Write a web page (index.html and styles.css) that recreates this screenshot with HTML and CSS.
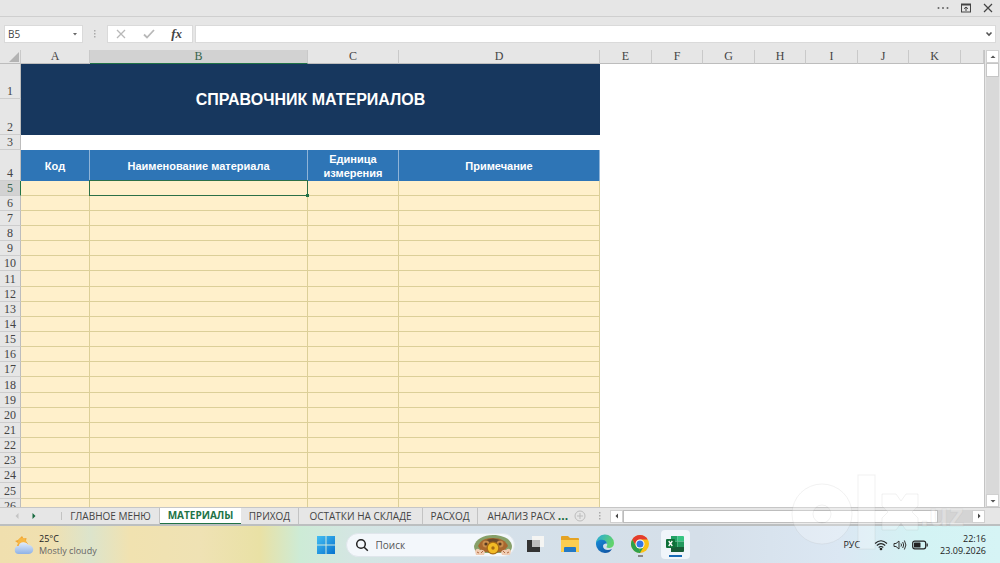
FILE: index.html
```html
<!DOCTYPE html>
<html lang="ru">
<head>
<meta charset="utf-8">
<meta name="viewport" content="width=device-width, initial-scale=1">
<title>Справочник материалов</title>
<link rel="stylesheet" href="styles.css">
</head>
<body>
<div class="screen">
  <header class="titlebar">
    <button class="icon-button" aria-label="Ещё"><svg width="14" height="12" viewBox="0 0 14 12" fill="#666"><circle cx="2.500" cy="6" r="1"/><circle cx="7" cy="6" r="1"/><circle cx="11.500" cy="6" r="1"/></svg></button>
    <button class="icon-button" aria-label="Параметры ленты"><svg width="12" height="12" viewBox="0 0 12 12" fill="none" stroke="#444"><path d="M1 2.500h10" stroke-width="2"/><rect x="1.500" y="2.500" width="9" height="7.500"/><path d="M6 9V5M4 6.800 6 5l2 1.800"/></svg></button>
    <button class="icon-button" aria-label="Закрыть"><svg width="12" height="12" viewBox="0 0 12 12" fill="none" stroke="#444" stroke-width="1.200"><path d="m2 2 8 8M10 2l-8 8"/></svg></button>
  </header>

  <div class="formula-row">
    <div class="name-box">
      <input class="name-input" type="text" value="B5" aria-label="Имя ячейки">
      <button class="icon-button" aria-label="Список имён"><svg width="8" height="8" viewBox="0 0 8 8" fill="#666"><path d="M2 3h4L4 5.500z"/></svg></button>
    </div>
    <svg class="grip" width="4" height="12" viewBox="0 0 4 12" fill="#aaa"><path d="M1 2h1.500v1.500H1zM1 5h1.500v1.500H1zM1 8h1.500v1.500H1z"/></svg>
    <div class="formula-tools">
      <button class="icon-button" aria-label="Отмена"><svg width="12" height="12" viewBox="0 0 12 12" fill="none" stroke="#b8b8b8" stroke-width="1.300"><path d="m2 2 8 8M10 2l-8 8"/></svg></button>
      <button class="icon-button" aria-label="Ввод"><svg width="12" height="12" viewBox="0 0 12 12" fill="none" stroke="#b8b8b8" stroke-width="1.800"><path d="m1 6.500 3 3L11 2"/></svg></button>
      <button class="icon-button fx" aria-label="Вставить функцию">fx</button>
    </div>
    <div class="formula-box">
      <input class="formula-input" type="text" aria-label="Строка формул">
      <button class="icon-button" aria-label="Развернуть"><svg width="10" height="10" viewBox="0 0 10 10" fill="none" stroke="#555" stroke-width="1.600"><path d="m2.500 3.500 2.500 2.500 2.500-2.500"/></svg></button>
    </div>
  </div>

  <main class="workspace">
    <div class="sheet">
      <table class="grid">
        <colgroup><col class="c-num"><col class="c-a"><col class="c-b"><col class="c-c"><col class="c-d"><col class="c-even"><col class="c-odd"><col class="c-even"><col class="c-odd"><col class="c-even"><col class="c-odd"><col class="c-even"><col></colgroup>
        <thead>
          <tr class="letters"><th class="corner"><svg width="12" height="12" viewBox="0 0 12 12"><path d="M11 1v10H1z" fill="#b3b3b3"/></svg></th><th>A</th><th class="picked">B</th><th>C</th><th>D</th><th>E</th><th>F</th><th>G</th><th>H</th><th>I</th><th>J</th><th>K</th><th></th></tr>
        </thead>
        <tbody>
          <tr class="title-top"><th>1</th><td class="title" colspan="4" rowspan="2">СПРАВОЧНИК МАТЕРИАЛОВ</td></tr>
          <tr class="title-bottom"><th>2</th></tr>
          <tr class="spacer"><th>3</th></tr>
          <tr class="heads"><th>4</th><td>Код</td><td>Наименование материала</td><td>Единица измерения</td><td>Примечание</td></tr>
        </tbody>
        <tbody class="entries">
          <tr><th class="picked">5</th><td></td><td class="active-cell"><span class="handle"></span></td><td></td><td></td></tr>
          <tr><th>6</th><td></td><td></td><td></td><td></td></tr>
          <tr><th>7</th><td></td><td></td><td></td><td></td></tr>
          <tr><th>8</th><td></td><td></td><td></td><td></td></tr>
          <tr><th>9</th><td></td><td></td><td></td><td></td></tr>
          <tr><th>10</th><td></td><td></td><td></td><td></td></tr>
          <tr><th>11</th><td></td><td></td><td></td><td></td></tr>
          <tr><th>12</th><td></td><td></td><td></td><td></td></tr>
          <tr><th>13</th><td></td><td></td><td></td><td></td></tr>
          <tr><th>14</th><td></td><td></td><td></td><td></td></tr>
          <tr><th>15</th><td></td><td></td><td></td><td></td></tr>
          <tr><th>16</th><td></td><td></td><td></td><td></td></tr>
          <tr><th>17</th><td></td><td></td><td></td><td></td></tr>
          <tr><th>18</th><td></td><td></td><td></td><td></td></tr>
          <tr><th>19</th><td></td><td></td><td></td><td></td></tr>
          <tr><th>20</th><td></td><td></td><td></td><td></td></tr>
          <tr><th>21</th><td></td><td></td><td></td><td></td></tr>
          <tr><th>22</th><td></td><td></td><td></td><td></td></tr>
          <tr><th>23</th><td></td><td></td><td></td><td></td></tr>
          <tr><th>24</th><td></td><td></td><td></td><td></td></tr>
          <tr><th>25</th><td></td><td></td><td></td><td></td></tr>
          <tr><th>26</th><td></td><td></td><td></td><td></td></tr>
        </tbody>
      </table>
    </div>
    <div class="vscroll">
      <button class="scroll-button" aria-label="Вверх"><svg width="8" height="8" viewBox="0 0 8 8" fill="#555"><path d="M1.500 5h5L4 2.500z"/></svg></button>
      <div class="vthumb"></div>
      <div class="vtrack"></div>
      <button class="scroll-button" aria-label="Вниз"><svg width="8" height="8" viewBox="0 0 8 8" fill="#555"><path d="M1.500 3h5L4 5.500z"/></svg></button>
    </div>
  </main>

  <div class="tabs-row">
    <div class="tab-arrows">
      <button class="icon-button" aria-label="Предыдущий лист"><svg width="8" height="8" viewBox="0 0 8 8" fill="#c4c4c4"><path d="M5.500 1v6L2.500 4z"/></svg></button>
      <button class="icon-button" aria-label="Следующий лист"><svg width="8" height="8" viewBox="0 0 8 8" fill="#17693f"><path d="M2.500 1v6L5.500 4z"/></svg></button>
    </div>
    <nav class="tabs">
      <button class="tab tab-menu">ГЛАВНОЕ МЕНЮ</button>
      <button class="tab tab-materials current">МАТЕРИАЛЫ</button>
      <button class="tab tab-income">ПРИХОД</button>
      <button class="tab tab-stock">ОСТАТКИ НА СКЛАДЕ</button>
      <button class="tab tab-expense">РАСХОД</button>
      <button class="tab tab-analysis">АНАЛИЗ РАСХ</button>
    </nav>
    <button class="icon-button more" aria-label="Другие листы">...</button>
    <button class="icon-button add" aria-label="Новый лист"><svg width="12" height="12" viewBox="0 0 12 12" fill="none" stroke="#bdbdbd"><circle cx="6" cy="6" r="5"/><path d="M6 3v6M3 6h6"/></svg></button>
    <svg class="grip" width="4" height="12" viewBox="0 0 4 12" fill="#aaa"><path d="M1 2h1.500v1.500H1zM1 5h1.500v1.500H1zM1 8h1.500v1.500H1z"/></svg>
    <div class="hscroll">
      <button class="scroll-button" aria-label="Влево"><svg width="8" height="8" viewBox="0 0 8 8" fill="#444"><path d="M5 1.500v5L2.500 4z"/></svg></button>
      <div class="hthumb"></div>
      <div class="htrack"></div>
      <button class="scroll-button" aria-label="Вправо"><svg width="8" height="8" viewBox="0 0 8 8" fill="#444"><path d="M3 1.500v5L5.500 4z"/></svg></button>
    </div>
  </div>

  <footer class="taskbar">
    <div class="weather">
      <svg width="20" height="20" viewBox="0 0 20 20"><defs><linearGradient id="cloud" x1="0" y1="0" x2="0" y2="1"><stop offset="0" stop-color="#e2ecfb"/><stop offset="1" stop-color="#8fb2e6"/></linearGradient></defs><path d="M8 1l1.500 2.500 3-.5-.5 3 2 3-4 3-7-1L4 8 1 6l3-1z" fill="#f2a531"/><circle cx="8" cy="7" r="4" fill="#f7b844"/><path d="M5 19a4 4 0 0 1-.5-8 5.500 5.500 0 0 1 10-1 4.500 4.500 0 0 1 .5 9z" fill="url(#cloud)"/></svg>
      <div class="weather-text"><span class="degrees">25°C</span><span class="sky">Mostly cloudy</span></div>
    </div>
    <div class="apps">
      <button class="icon-button app-start" aria-label="Пуск"><svg width="20" height="20" viewBox="0 0 20 20"><defs><linearGradient id="win" x1="0" y1="0" x2="1" y2="1"><stop offset="0" stop-color="#43bdf2"/><stop offset="1" stop-color="#0873cf"/></linearGradient></defs><path d="M1 1h8.500v8.500H1zM10.500 1H19v8.500h-8.500zM1 10.500h8.500V19H1zM10.500 10.500H19V19h-8.500z" fill="url(#win)"/></svg></button>
      <div class="search">
        <svg width="14" height="14" viewBox="0 0 14 14" fill="none" stroke="#222" stroke-width="1.500"><circle cx="6" cy="6" r="4.300"/><path d="m9.200 9.200 3.600 3.600"/></svg>
        <input class="search-input" type="text" placeholder="Поиск" aria-label="Поиск">
        <svg width="40" height="22" viewBox="0 0 40 22"><path d="M1 12C3 5 10 1 20 1s18 4 19 11q0 5-4 7H5q-4-2-4-7z" fill="#87a069"/><path d="M5 12C8 6 12 4 20 4s13 3 15 8l-5 6H9z" fill="#a8672f"/><path d="M11 7q9-5 18 0l-4 4H15z" fill="#6d4a2a"/><circle cx="13" cy="10" r="3.500" fill="#c98d4c"/><circle cx="27" cy="10" r="3.500" fill="#c98d4c"/><circle cx="13" cy="10" r="1.600" fill="#573a22"/><circle cx="27" cy="10" r="1.600" fill="#573a22"/><circle cx="20" cy="14" r="6.500" fill="#a76c16"/><circle cx="20" cy="14" r="5.200" fill="#f2bb25"/><circle cx="20" cy="14" r="1.700" fill="#a66c12"/><path d="M2 17q2-4 5-1 3-1 5 2l-1 3H3zM38 17q-2-4-5-1-3-1-5 2l1 3h8z" fill="#f0cdb4"/><path d="m4 18 2 1M10 17l-2 2M36 18l-2 1M30 17l2 2" stroke="#b06a40"/></svg>
      </div>
      <button class="icon-button app" aria-label="Представление задач"><svg width="20" height="20" viewBox="0 0 20 20"><path d="M7 2h12v11H7z" fill="#f5f5f3"/><path d="M2 6h13v12H2z" fill="#333"/><path d="M7 6h8v7H7z" fill="#bdbdbd"/></svg></button>
      <button class="icon-button app" aria-label="Проводник"><svg width="20" height="20" viewBox="0 0 20 20"><path d="M1 3q0-1 1-1h6l2 2h8q1 0 1 1v13H1z" fill="#e5a323"/><path d="M1 6h18v11q0 1-1 1H2q-1 0-1-1z" fill="#fbce50"/><path d="M4 18v-4q0-1 1-1h10q1 0 1 1v4z" fill="#2379c5"/></svg></button>
      <button class="icon-button app" aria-label="Edge"><svg width="20" height="20" viewBox="0 0 20 20"><defs><linearGradient id="edgeTop" x1="0" y1="0" x2="1" y2=".4"><stop offset="0" stop-color="#25a8dd"/><stop offset="1" stop-color="#61d36c"/></linearGradient><linearGradient id="edgeBody" x1="0" y1="0" x2="1" y2="1"><stop offset="0" stop-color="#178bd8"/><stop offset="1" stop-color="#104e9d"/></linearGradient></defs><path d="M1 10a9 9 0 0 1 18-1c0 4-3 5-5 5-2.500 0-3-1-2-2 1-3-1-5-4-5-4 0-6 2-7 5z" fill="url(#edgeTop)"/><path d="M1 10c0-3 4-5 7-4 2 0 4 2 4 4-1-1-4 0-4 2 0 4 5 5 9 3-2 3-4 4-7 4a9 9 0 0 1-9-9z" fill="url(#edgeBody)"/></svg></button>
      <button class="icon-button app app-open" aria-label="Chrome"><svg width="20" height="20" viewBox="0 0 20 20"><circle cx="10" cy="10" r="9" fill="#fbc116"/><path d="M2.200 5.500a9 9 0 0 1 15.600 0H10a4.500 4.500 0 0 0-3.900 6.700z" fill="#e33b2e"/><path d="M2.200 5.500 6.100 12.300A4.500 4.500 0 0 0 10 14.500L8.500 18.900A9 9 0 0 1 2.200 5.500z" fill="#2da14c"/><path d="M13.900 12.300 10 19a9 9 0 0 1-1.500-.1L10 14.500z" fill="#2da14c"/><circle cx="10" cy="10" r="4.500" fill="#fff"/><circle cx="10" cy="10" r="3.500" fill="#3577e5"/></svg></button>
      <button class="icon-button app app-current" aria-label="Excel"><svg width="20" height="20" viewBox="0 0 20 20"><path d="M6 2h6.500v5.500H6z" fill="#23a366"/><path d="M12.500 2H18q1 0 1 1v4.500h-6.500z" fill="#36c481"/><path d="M6 7.500h6.500V13H6z" fill="#107c41"/><path d="M12.500 7.500H19V13h-6.500z" fill="#23995e"/><path d="M6 13h13v4q0 1-1 1H6z" fill="#185c37"/><rect x="1" y="5" width="9" height="9" rx="1" fill="#0f7039"/><path d="m3.700 7 3.600 5M7.300 7l-3.600 5" stroke="#fff" stroke-width="1.300"/></svg></button>
    </div>
    <div class="tray">
      <span class="language">РУС</span>
      <svg width="14" height="12" viewBox="0 0 14 12" fill="none" stroke="#222" stroke-width="1.100"><path d="M1 4.500q6-5.500 12 0M2.800 6.500q4.200-3.800 8.400 0M4.700 8.500q2.300-2 4.600 0"/><circle cx="7" cy="10" r=".8" fill="#222"/></svg>
      <svg width="14" height="12" viewBox="0 0 14 12" fill="none" stroke="#333"><path d="M1 4.500h2L6 2v8L3 7.500H1zM8 4.500q1 1.500 0 3M9.700 3q2 3 0 6M11.400 1.500q3 4.500 0 9"/></svg>
      <svg width="16" height="12" viewBox="0 0 16 12"><rect x=".7" y="2.200" width="13" height="7.600" rx="2" fill="none" stroke="#222" stroke-width="1.200"/><rect x="2" y="3.500" width="6.500" height="5" rx=".6" fill="#222"/><path d="M15.200 4.500v3" stroke="#222" stroke-width="1.200"/></svg>
      <div class="clock"><span>22:16</span><span>23.09.2026</span></div>
    </div>
  </footer>

  <svg class="watermark" width="200" height="90" viewBox="0 0 200 90" aria-hidden="true">
    <g fill="#fff" fill-opacity=".25" stroke="#999" stroke-opacity=".14">
      <path fill-rule="evenodd" d="M2 46a30 30 0 1 0 60 0a30 30 0 1 0-60 0zM23 46a9 9 0 1 0 18 0a9 9 0 1 0-18 0z"/>
      <rect x="68" y="7" width="17" height="74"/>
      <path d="M92 26h14l5 7 5-7h12v12l-6 6 6 6v12h-12l-5-7-5 7H92V50l6-6-6-6z"/>
      <text class="mark-uz" x="130" y="58">.uz</text>
    </g>
  </svg>
</div>
</body>
</html>
```
FILE: styles.css
```css
* { box-sizing: border-box; }

body {
  margin: 0;
  font-family: "Open Sans", "Noto Sans", sans-serif;
  font-size: 10px;
  color: #444;
}

button, input { font: inherit; color: inherit; }

svg { display: block; flex: none; }

.screen {
  position: relative;
  display: flex;
  flex-direction: column;
  height: 100vh;
  overflow: hidden;
  background: #e6e6e6;
}

.icon-button {
  display: flex;
  align-items: center;
  justify-content: center;
  padding: 0;
  border: 0;
  background: none;
}

/* Title bar and formula bar */
.titlebar {
  display: flex;
  flex: none;
  justify-content: flex-end;
  gap: 10px;
  height: 17px;
  padding-right: 6px;
  border-bottom: 1px solid #cfcfcf;
}

.formula-row {
  display: flex;
  flex: none;
  align-items: center;
  height: 33px;
  padding: 0 4px;
}

.name-box, .formula-tools, .formula-box {
  display: flex;
  align-items: center;
  height: 18px;
  background: #fff;
  border: 1px solid #dadada;
}

.name-box { width: 79px; padding-right: 3px; }

.name-input, .formula-input {
  flex: 1;
  min-width: 0;
  padding: 0 3px;
  border: 0;
  background: none;
}

.grip { margin: 0 10px; }

.formula-tools { justify-content: space-between; width: 86px; padding: 0 10px 0 7px; }

.fx {
  font-family: "Liberation Serif", serif;
  font-size: 13px;
  font-style: italic;
  font-weight: bold;
}

.formula-box { flex: 1; margin-left: 2px; padding-right: 1px; }

/* Sheet */
.workspace { display: flex; flex: 1; min-height: 0; }

.sheet {
  flex: 1;
  overflow: hidden;
  background: #fff;
  border-right: 1px solid #c4c4c4;
}

.grid {
  width: 100%;
  table-layout: fixed;
  border-collapse: separate;
  border-spacing: 0;
}

.c-num { width: 21px; }
.c-a { width: 69px; }
.c-b { width: 218px; }
.c-c { width: 91px; }
.c-d { width: 201px; }
.c-even { width: 52px; }
.c-odd { width: 51px; }

.grid th, .grid td { padding: 0; }

.grid th {
  font: 12px/13px "Liberation Serif", serif;
  vertical-align: bottom;
  background: #e6e6e6;
  border-right: 1px solid #bdbdbd;
  border-bottom: 1px solid #cdcdcd;
}

.letters { height: 14px; }
.grid .letters th { border-color: #e6e6e6 #c9c9c9 #bdbdbd; }
.grid .letters .picked { background: #d2d2d2; border-bottom-color: #217346; color: #35644a; }
.corner svg { margin-left: 8px; }

.title-top { height: 35px; }
.title-bottom { height: 36px; }
.spacer { height: 15px; }
.heads { height: 31px; }

.title {
  font: bold 16px/20px "Liberation Sans", sans-serif;
  text-align: center;
  color: #fff;
  background: #17375e;
}

.heads td {
  font: bold 11px/14px "Liberation Sans", sans-serif;
  text-align: center;
  color: #fff;
  background: #2e75b6;
  border-right: 1px solid #8fb4d8;
}

.entries tr { height: 15px; }
.entries tr:nth-child(7n) { height: 16px; }

.entries td {
  background: #fff0cb;
  border-right: 1px solid #dccf98;
  border-bottom: 1px solid #dccf98;
}

.grid .entries .picked {
  background: #d2d2d2;
  border-right-color: #217346;
  color: #35644a;
}

.entries .active-cell { position: relative; }

.active-cell::before {
  content: "";
  position: absolute;
  z-index: 1;
  inset: -1px;
  border: 1px solid #2c7047;
}

.handle {
  position: absolute;
  z-index: 1;
  right: -2px;
  bottom: -2px;
  width: 3px;
  height: 3px;
  background: #217346;
}

/* Scroll bars */
.vscroll {
  display: flex;
  flex-direction: column;
  width: 15px;
  padding: 0 1px;
  background: #e6e6e6;
}

.scroll-button {
  display: flex;
  flex: none;
  align-items: center;
  justify-content: center;
  width: 13px;
  height: 13px;
  padding: 0;
  border: 1px solid #d0d0d0;
  background: #fff;
}

.vthumb { height: 14px; border: 1px solid #c6c6c6; background: #fff; }
.vtrack { flex: 1; background: #d9d9d9; }

.hscroll { display: flex; flex: 1; align-items: center; }
.hthumb { flex: 7; height: 13px; background: #fff; border: 1px solid #bdbdbd; }
.htrack { flex: 1; max-width: 34px; height: 13px; background: #d4d4d4; }

/* Sheet tabs */
.tabs-row {
  display: flex;
  flex: none;
  height: 19px;
  padding-right: 15px;
  align-items: center;
  border-top: 1px solid #c6c6c6;
  border-bottom: 2px solid #bcbfc0;
}

.tab-arrows { display: flex; gap: 9px; width: 62px; padding-left: 13px; border-right: 1px solid #c3c3c3; }

.tabs { display: flex; align-self: stretch; }

.tab {
  padding: 0 0 1px;
  border: 0;
  border-right: 1px solid #c3c3c3;
  background: none;
  line-height: 14px;
  white-space: nowrap;
}

.tab-menu { width: 98px; }
.tab-materials { width: 81px; }
.tab-income { width: 58px; }
.tab-stock { width: 124px; }
.tab-expense { width: 55px; }
.tab-analysis { width: 77px; border-right: 0; text-align: right; }

.current {
  border-right: 0;
  border-bottom: 1px solid #217346;
  background: #fff;
  font-weight: bold;
  color: #217346;
}

.more { width: 16px; font-size: 12px; font-weight: bold; line-height: 14px; color: #17693f; }
.add { width: 18px; }
.tabs-row .grip { margin: 0 8px 0 9px; }

/* Taskbar */
.taskbar {
  display: grid;
  flex: none;
  grid-template-columns: 1fr auto 1fr;
  align-items: center;
  height: 37px;
  padding: 0 14px;
  background: linear-gradient(90deg, #f0dfae 0%, #f0e0b0 5%, #dce4cc 9%, #f1e2b0 13%, #efe2b4 20%, #e9e1a5 26%, #cdebd6 30%, #d4e6e2 35%, #d5e1ea 45%, #d5dfe9 70%, #dbe7f3 84%, #d3f3f4 92%, #d6f4f5 100%);
}

.weather { display: flex; align-items: center; gap: 5px; }
.weather-text { display: flex; flex-direction: column; font-size: 9px; line-height: 12px; }
.degrees { color: #222; }
.sky { color: #666; }

.apps { display: flex; align-items: center; padding-left: 5px; }
.app-start { width: 20px; height: 28px; margin-right: 10px; }

.search {
  display: flex;
  align-items: center;
  gap: 7px;
  width: 169px;
  height: 24px;
  padding: 0 1px 0 8px;
  border: 1px solid #e0e6ec;
  border-radius: 12px;
  background: #f3f7fb;
}

.search-input {
  flex: 1;
  min-width: 0;
  padding: 0;
  border: 0;
  background: none;
}

.search-input::placeholder { color: #555; opacity: 1; }

.app { width: 29px; height: 29px; margin-left: 6px; border-radius: 4px; border-bottom: 2px solid transparent; }
.app-open { background: linear-gradient(#888, #888) center bottom / 5px 2px no-repeat; }
.app-current { background: linear-gradient(#1769b5, #1769b5) center bottom / 13px 2px no-repeat, #f0f5fa; }

.tray { display: flex; justify-content: flex-end; align-items: center; gap: 5px; font-size: 9px; color: #222; }
.language { margin-right: 9px; }
.clock { display: flex; flex-direction: column; margin-left: 7px; line-height: 12px; text-align: right; }

/* Site mark laid over the lower right corner */
.watermark { position: absolute; right: 10px; bottom: 5px; pointer-events: none; }
.mark-uz { font: bold 32px "Liberation Sans", sans-serif; }
```
